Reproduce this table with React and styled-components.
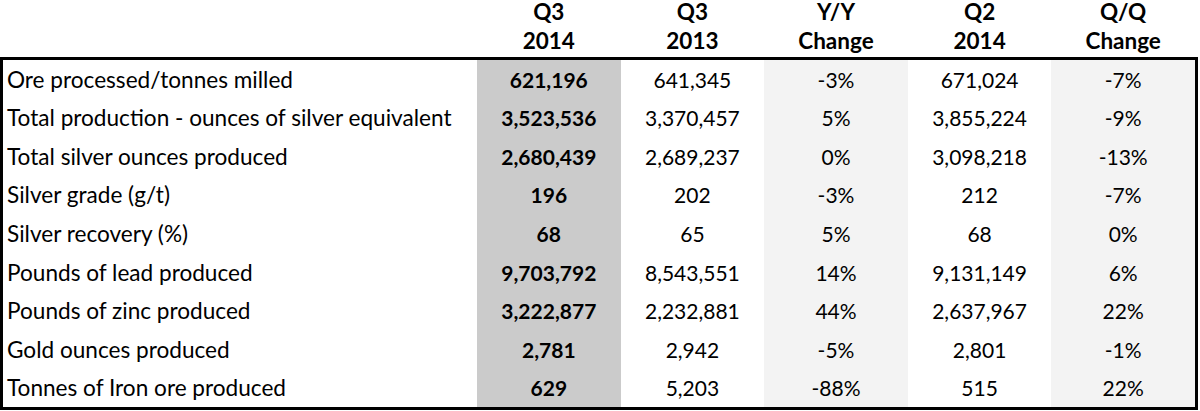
import React from 'react';
import styled, { createGlobalStyle } from 'styled-components';

const GlobalStyle = createGlobalStyle`
  body {
    margin: 0;
    background: #fff;
    font-family: Lato, "Liberation Sans", sans-serif;
    color: #000;
  }
`;

const Frame = styled.div`
  width: 1198px;
`;

const HeadRow = styled.div`
  display: grid;
  grid-template-columns: 477px repeat(5, 1fr);
  width: 1195px;
  height: 57px;
`;

const HeadCell = styled.div`
  display: grid;
  grid-template-rows: 24px 34px;
  align-items: center;
  font-weight: 700;
  font-size: 22.5px;
  line-height: 1;
  text-align: center;
`;

const Body = styled.div`
  border: 3px solid #000;
  display: grid;
  grid-template-columns: 474px repeat(5, 1fr);
  grid-auto-rows: 38.55px;
`;

const tones = {
  white: '#ffffff',
  dark: '#cbcbcb',
  light: '#f3f3f3',
};

const Label = styled.div`
  display: flex;
  align-items: center;
  padding-left: 4px;
  font-size: 22.6px;
  white-space: nowrap;
`;

const Value = styled.div`
  display: flex;
  align-items: center;
  justify-content: center;
  font-size: 21px;
  background: ${(p) => tones[p.$tone]};
  font-weight: ${(p) => (p.$bold ? 700 : 400)};
`;

const columns = [
  { top: 'Q3', bottom: '2014', tone: 'dark', bold: true },
  { top: 'Q3', bottom: '2013', tone: 'white' },
  { top: 'Y/Y', bottom: 'Change', tone: 'light' },
  { top: 'Q2', bottom: '2014', tone: 'white' },
  { top: 'Q/Q', bottom: 'Change', tone: 'light' },
];

const rows = [
  ['Ore processed/tonnes milled', '621,196', '641,345', '-3%', '671,024', '-7%'],
  ['Total production - ounces of silver equivalent', '3,523,536', '3,370,457', '5%', '3,855,224', '-9%'],
  ['Total silver ounces produced', '2,680,439', '2,689,237', '0%', '3,098,218', '-13%'],
  ['Silver grade (g/t)', '196', '202', '-3%', '212', '-7%'],
  ['Silver recovery (%)', '68', '65', '5%', '68', '0%'],
  ['Pounds of lead produced', '9,703,792', '8,543,551', '14%', '9,131,149', '6%'],
  ['Pounds of zinc produced', '3,222,877', '2,232,881', '44%', '2,637,967', '22%'],
  ['Gold ounces produced', '2,781', '2,942', '-5%', '2,801', '-1%'],
  ['Tonnes of Iron ore produced', '629', '5,203', '-88%', '515', '22%'],
];

export default function App() {
  return (
    <Frame>
      <GlobalStyle />
      <HeadRow>
        <div />
        {columns.map((c, i) => (
          <HeadCell key={i}>
            <span>{c.top}</span>
            <span>{c.bottom}</span>
          </HeadCell>
        ))}
      </HeadRow>
      <Body>
        {rows.map(([label, ...vals]) => (
          <React.Fragment key={label}>
            <Label>{label}</Label>
            {vals.map((v, i) => (
              <Value key={i} $tone={columns[i].tone} $bold={columns[i].bold}>
                {v}
              </Value>
            ))}
          </React.Fragment>
        ))}
      </Body>
    </Frame>
  );
}
